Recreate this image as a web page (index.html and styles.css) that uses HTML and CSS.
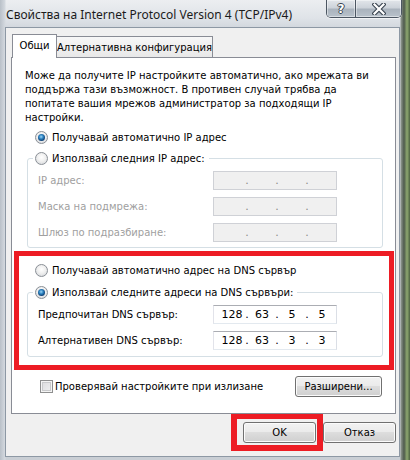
FILE: index.html
```html
<!DOCTYPE html>
<html>
<head>
<meta charset="utf-8">
<link rel="stylesheet" href="styles.css">
</head>
<body>
<div class="window">
  <div class="titlebar">
    <div class="title">Свойства на Internet Protocol Version 4 (TCP/IPv4)</div>
    <div class="caption">
      <div class="cbtn help"><span>?</span></div>
      <div class="cbtn close">
        <svg width="14" height="12" viewBox="0 0 14 12">
          <path d="M2.5 1.5 L11.5 10.5 M11.5 1.5 L2.5 10.5" stroke="#3a4450" stroke-width="4.4" stroke-linecap="square" fill="none"/>
          <path d="M2.5 1.5 L11.5 10.5 M11.5 1.5 L2.5 10.5" stroke="#ffffff" stroke-width="2.2" stroke-linecap="square" fill="none"/>
        </svg>
      </div>
    </div>
  </div>
  <div class="client">
    <div class="tabs">
      <div class="tab active">Общи</div>
      <div class="tab">Алтернативна конфигурация</div>
    </div>
    <div class="panel">
      <p class="intro">Може да получите IP настройките автоматично, ако мрежата ви<br>поддържа тази възможност. В противен случай трябва да<br>попитате вашия мрежов администратор за подходящи IP<br>настройки.</p>

      <div class="radio-row first"><span class="radio checked"></span><span>Получавай автоматично IP адрес</span></div>

      <div class="group g1">
        <div class="legend"><span class="radio"></span><span>Използвай следния IP адрес:</span></div>
        <div class="field disabled"><span class="flabel">IP адрес:</span><div class="ipbox"><span class="oct"></span><span class="dot">.</span><span class="oct"></span><span class="dot">.</span><span class="oct"></span><span class="dot">.</span><span class="oct"></span></div></div>
        <div class="field disabled"><span class="flabel">Маска на подмрежа:</span><div class="ipbox"><span class="oct"></span><span class="dot">.</span><span class="oct"></span><span class="dot">.</span><span class="oct"></span><span class="dot">.</span><span class="oct"></span></div></div>
        <div class="field disabled"><span class="flabel">Шлюз по подразбиране:</span><div class="ipbox"><span class="oct"></span><span class="dot">.</span><span class="oct"></span><span class="dot">.</span><span class="oct"></span><span class="dot">.</span><span class="oct"></span></div></div>
      </div>

      <div class="radio-row dns"><span class="radio"></span><span>Получавай автоматично адрес на DNS сървър</span></div>

      <div class="group g2">
        <div class="legend"><span class="radio checked"></span><span>Използвай следните адреси на DNS сървъри:</span></div>
        <div class="field"><span class="flabel">Предпочитан DNS сървър:</span><div class="ipbox"><span class="oct">128</span><span class="dot">.</span><span class="oct">63</span><span class="dot">.</span><span class="oct">5</span><span class="dot">.</span><span class="oct">5</span></div></div>
        <div class="field"><span class="flabel">Алтернативен DNS сървър:</span><div class="ipbox"><span class="oct">128</span><span class="dot">.</span><span class="oct">63</span><span class="dot">.</span><span class="oct">3</span><span class="dot">.</span><span class="oct">3</span></div></div>
      </div>

      <div class="bottom-row">
        <span class="checkbox"></span><span class="cblabel">Проверявай настройките при излизане</span>
        <div class="btn adv">Разширени...</div>
      </div>
    </div>
    <div class="footer">
      <div class="btn ok">OK</div>
      <div class="btn cancel">Отказ</div>
    </div>
  </div>
  <div class="annot dns-mark"></div>
  <div class="annot ok-mark"></div>
</div>
</body>
</html>
```

FILE: styles.css
```css
* { box-sizing: border-box; }
html, body { margin: 0; padding: 0; }
body {
  width: 410px;
  height: 460px;
  overflow: hidden;
  font-family: "DejaVu Sans", sans-serif;
  font-size: 10px;
  color: #000;
}
.window {
  position: relative;
  width: 410px;
  height: 460px;
  display: flex;
  flex-direction: column;
  background:
    linear-gradient(to right, rgba(0,0,0,0) 0, rgba(0,0,0,0) 400px, #8c948c 401px, #4e5a4c 404px, #8ea870 407px, #4a6040 410px),
    linear-gradient(to right, #b9c0c8 0, #d4d9df 5px, rgba(0,0,0,0) 6px),
    linear-gradient(to bottom, #eceef1 0, #dfe3e8 18px, #d2d7dd 28px, #c9ced4 100%);
}
.titlebar {
  height: 27px;
  display: flex;
  flex-shrink: 0;
}
.title {
  padding: 7px 0 0 6px;
  font-family: "Noto Sans", sans-serif;
  font-size: 12px;
  line-height: 16px;
  color: #1b1b1b;
  white-space: nowrap;
}
.caption {
  margin-left: auto;
  margin-right: 8px;
  display: flex;
  height: 18px;
  align-self: flex-start;
  border: 1px solid #4c5662;
  border-top: none;
  border-radius: 0 0 5px 5px;
  overflow: hidden;
  box-shadow: 0 1px 0 rgba(255,255,255,0.6);
}
.cbtn {
  height: 17px;
  display: flex;
  align-items: center;
  justify-content: center;
  background: linear-gradient(to bottom, #e2e6ea 0, #cdd3da 45%, #aab3bd 55%, #b9c2cb 100%);
  box-shadow: inset 0 0 0 1px rgba(255,255,255,0.45);
}
.help { width: 29px; border-right: 1px solid #4c5662; }
.help span {
  font-family: "DejaVu Sans", sans-serif;
  font-weight: bold;
  font-size: 12px;
  color: #fff;
  text-shadow: 1px 0 0 #3a4450, -1px 0 0 #3a4450, 0 1px 0 #3a4450, 0 -1px 0 #3a4450;
}
.close { width: 45px; }

.client {
  margin-left: 5px;
  width: 395px;
  height: 430px;
  border: 1px solid #8d98a4;
  background: #f0f0f0;
  display: flex;
  flex-direction: column;
}
.tabs {
  display: flex;
  align-items: flex-end;
  height: 23px;
  margin-top: 6px;
  margin-left: 6px;
}
.tab {
  height: 21px;
  border: 1px solid #898c95;
  border-bottom: none;
  background: linear-gradient(to bottom, #f7f7f7, #e8e8e8);
  display: flex;
  align-items: center;
  justify-content: center;
  padding-top: 1px;
  width: 157px;
  margin-left: -1px;
  color: #000;
}
.tab.active {
  height: 24px;
  width: 45px;
  margin-left: 0;
  margin-bottom: -1px;
  background: #fff;
  position: relative;
  z-index: 1;
  padding-top: 0;
  padding-bottom: 2px;
}
.panel {
  margin-left: 5px;
  width: 385px;
  height: 357px;
  border: 1px solid #898c95;
  background: #fff;
  display: flex;
  flex-direction: column;
}
.intro {
  margin: 11px 0 0 13px;
  line-height: 14px;
  white-space: nowrap;
  color: #000;
}
.radio-row {
  display: flex;
  align-items: center;
  height: 14px;
  gap: 4px;
}
.radio-row.first { margin: 5px 0 0 23px; }
.radio-row.dns { margin: 15px 0 0 23px; }
.radio {
  width: 13px;
  height: 13px;
  border-radius: 50%;
  border: 1px solid #8a8f96;
  background: radial-gradient(circle at 50% 40%, #ffffff 0, #f0f0f0 45%, #cfd2d6 100%);
  flex-shrink: 0;
  position: relative;
}
.radio.checked::after {
  content: "";
  position: absolute;
  left: 2px;
  top: 2px;
  width: 7px;
  height: 7px;
  border-radius: 50%;
  background: radial-gradient(circle at 45% 40%, #9fd6f5 0, #2f86c4 35%, #0d3f74 70%, #3b83b8 100%);
}
.group {
  margin: 14px 12px 0 15px;
  border: 1px solid #d5dfe5;
  border-radius: 3px;
  display: flex;
  flex-direction: column;
}
.g1 { padding-bottom: 5px; }
.g2 { margin-top: 15px; padding-bottom: 6px; }
.legend {
  display: flex;
  align-items: center;
  gap: 4px;
  height: 14px;
  margin: -8px 0 0 5px;
  padding: 0 4px 0 2px;
  background: #fff;
  align-self: flex-start;
}
.field {
  display: flex;
  align-items: center;
  height: 19px;
  margin-top: 7px;
  padding-left: 10px;
}
.legend + .field { margin-top: 6px; }
.flabel { width: 175px; color: #000; }
.field.disabled .flabel { color: #a0a0a0; }
.ipbox {
  width: 124px;
  height: 19px;
  border: 1px solid #abadb3;
  border-color: #abadb3 #dbdfe6 #e3e9ef #e2e3ea;
  background: #fff;
  display: flex;
  align-items: center;
  padding-left: 5px;
  font-size: 11px;
}
.field.disabled .ipbox {
  background: #f0f0f0;
  border-color: #cfd1d6;
  color: #8a8a8a;
}
.oct { width: 26px; text-align: center; }
.dot { width: 4px; text-align: center; }
.bottom-row {
  display: flex;
  align-items: center;
  height: 21px;
  margin-top: 19px;
  padding-left: 28px;
}
.checkbox {
  width: 13px;
  height: 13px;
  border: 1px solid #8e8f8f;
  background: linear-gradient(135deg, #d9dadc 0, #f1f1f2 100%);
  box-shadow: inset 0 0 0 1px #f4f4f4, inset 0 0 0 2px #c9cacc;
  flex-shrink: 0;
}
.cblabel { margin-left: 2px; }
.btn {
  height: 21px;
  border: 1px solid #707070;
  border-radius: 3px;
  background: linear-gradient(to bottom, #f2f2f2 0, #ebebeb 45%, #dddddd 50%, #cfcfcf 100%);
  box-shadow: inset 0 0 0 1px #fbfbfb;
  display: flex;
  align-items: center;
  justify-content: center;
  color: #000;
}
.adv { margin-left: auto; margin-right: 13px; width: 87px; }
.footer {
  display: flex;
  justify-content: flex-end;
  gap: 7px;
  margin-top: 8px;
  margin-right: 3px;
}
.ok { width: 73px; }
.cancel { width: 73px; }
.annot {
  position: absolute;
  border: 5px solid #ed1c24;
}
.dns-mark { left: 14px; top: 251px; width: 380px; height: 119px; }
.ok-mark { left: 231px; top: 414px; width: 92px; height: 37px; border-width: 5px 6px 6px 6px; }
```
